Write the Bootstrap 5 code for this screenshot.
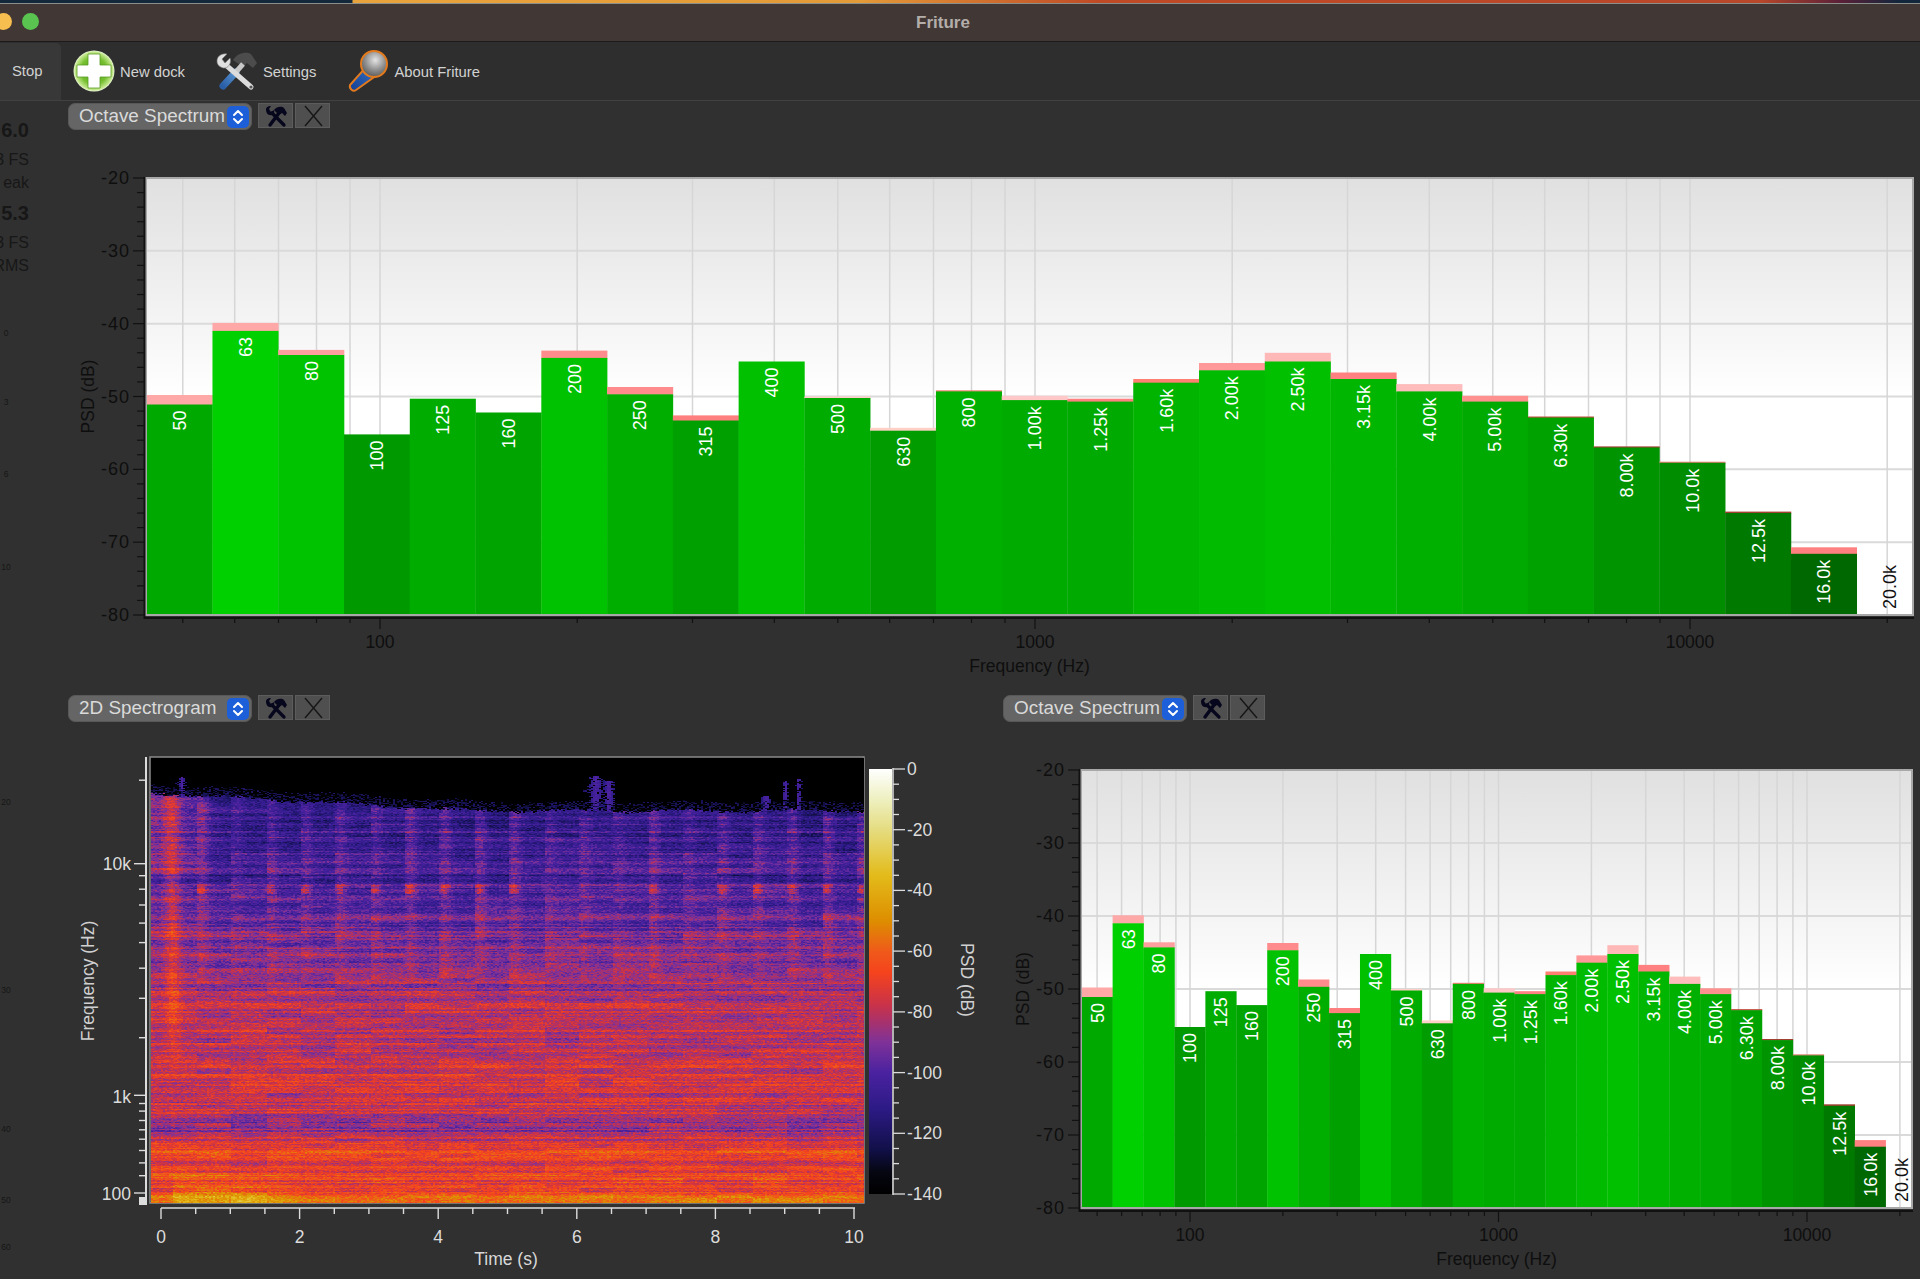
<!DOCTYPE html>
<html lang="en">
<head>
  <meta charset="UTF-8" />
  <title>Friture</title>
  <link href="https://cdn.jsdelivr.net/npm/bootstrap@5.3.3/dist/css/bootstrap.min.css" rel="stylesheet"/>
  <style>
    html, body { height: 1279px; overflow: hidden; }
    body { background: #303030; font-family: "Liberation Sans", Arial, sans-serif; color: #d4d4d4; }
    svg { display: block; }
    svg text { font-family: "Liberation Sans", Arial, sans-serif; }

    .top-strip { height: 4px; border-bottom: 1px solid #8a8f8c; background: linear-gradient(90deg, #14283c 0, #14283c 352px, #e9a33c 353px, #e39a38 860px, #bf4a26 1100px, #b9472a 1760px, #5a2038 1840px, #12263c 1900px); }
    .title-bar { height: 38px; background: #413735; border-bottom: 1px solid #1c1a1a; position: relative; }
    .title-text { font-size: 17px; font-weight: 700; color: #b4aeaa; width: 100%; text-align: center; padding-right: 34px; }
    .win-dot { position: absolute; top: 9px; width: 17px; height: 17px; border-radius: 50%; }
    .win-yellow { left: -5px; background: #f5be4f; }
    .win-green { left: 22px; background: #5ac451; }

    .tool-bar { height: 59px; background: #2e2e2e; border-bottom: 1px solid #414141; font-size: 14.8px; color: #d2d2d2; }
    .tool-stop { width: 61px; height: 57px; margin-top: 1px; background: #383838; border-top-right-radius: 5px; padding-left: 12px; }
    .tool-item { gap: 5px; margin-left: 31px; }
    .tool-item.tool-first { margin-left: 12px; }
    .tool-name { padding-top: 2px; }

    .meter-col { width: 68px; flex: none; color: #171717; }
    .meter-text { width: 29px; height: 177px; padding-top: 17px; text-align: right; white-space: nowrap; display: flex; flex-direction: column; align-items: flex-end; }
    .meter-num { font-size: 20px; font-weight: 700; line-height: 24px; margin-bottom: 7px; }
    .meter-lbl { font-size: 16px; line-height: 22.5px; }
    .meter-gap { margin-top: 7px; }

    .dock-head { height: 28px; gap: 6px; padding-top: 1px; }
    .dock-select { width: 184px; height: 27px; padding: 0 2px 0 10px; font-size: 18.9px; line-height: 1; color: #dadada; background: #656565; border: 1px solid #585858; border-radius: 7px; }
    .dock-select:hover { background: #656565; color: #dadada; border-color: #585858; }
    .select-arrow { width: 22px; height: 22px; border-radius: 5px; background: #1d5fd8; flex: none; }
    .dock-btn { width: 35px; height: 25px; margin-right: -4px; padding: 0; background: #4f4f4f; border: 1px solid #5c5c5c; border-radius: 0; }
    .dock-btn:hover { background: #4f4f4f; border-color: #5c5c5c; }
    .dock-first { padding-top: 1px; }
    .plot-top { width: 1852px; height: 564px; }
    .plot-left { width: 935px; height: 557px; }
    .plot-right { width: 917px; height: 557px; }
    .plot-wrap { position: relative; }
    /* the spectrogram picture sits over the axes svg, at the plot area */
    #spectro { position: absolute; left: 83px; top: 36px; width: 713px; height: 445px; filter: blur(.5px); }
  </style>
</head>
<body>
  <svg width="0" height="0" class="position-absolute">
    <defs>
      <symbol id="ico-tools" viewBox="0 0 24 24">
        <path d="M6 21 L15 9" stroke="#06061c" stroke-width="3.4" stroke-linecap="round" fill="none"/>
        <path d="M10 6 C13 2 18 2 20 4 L23 9 L21 12 L18 9 L15 11 z" fill="#06061c"/>
        <path d="M20 21 L8 9" stroke="#06061c" stroke-width="3.2" stroke-linecap="round" fill="none"/>
        <path d="M2 6 C2 3 4 2 7 2 L5 5 L7 8 L10 6 C11 9 9 12 6 11 C4 11 2 9 2 6 z" fill="#06061c"/>
      </symbol>
      <symbol id="ico-close" viewBox="0 0 24 24">
        <path d="M4 2 L21 22 M21 2 L4 22" stroke="#161616" stroke-width="1.4" fill="none"/>
      </symbol>
      <symbol id="ico-updown" viewBox="0 0 22 22">
        <path d="M7 9 L11 5 L15 9 M7 13 L11 17 L15 13" stroke="#fff" stroke-width="2" fill="none" stroke-linecap="round" stroke-linejoin="round"/>
      </symbol>
      <radialGradient id="g-plus" cx="50%" cy="50%" r="50%">
        <stop offset="0" stop-color="#4e9d1c"/><stop offset=".65" stop-color="#76c030"/><stop offset=".92" stop-color="#c4e88e"/><stop offset="1" stop-color="#eaf6d8"/>
      </radialGradient>
      <linearGradient id="g-handle" x1="0" y1="1" x2="1" y2="0">
        <stop offset="0" stop-color="#2a5fa8"/><stop offset="1" stop-color="#5a94d0"/>
      </linearGradient>
      <linearGradient id="g-mic" x1="0" y1="1" x2="1" y2="0">
        <stop offset="0" stop-color="#123f94"/><stop offset=".7" stop-color="#2c62b4"/><stop offset="1" stop-color="#9aa8bc"/>
      </linearGradient>
      <radialGradient id="g-ball" cx="55%" cy="35%" r="65%">
        <stop offset="0" stop-color="#e4e4e4"/><stop offset=".6" stop-color="#8e8e8e"/><stop offset="1" stop-color="#5c5c5c"/>
      </radialGradient>
    </defs>
  </svg>

  <div class="top-strip"></div>
  <div class="title-bar d-flex align-items-center">
    <span class="win-dot win-yellow"></span>
    <span class="win-dot win-green"></span>
    <div class="title-text">Friture</div>
  </div>

  <div class="tool-bar d-flex align-items-center">
    <div class="tool-stop d-flex align-items-center">Stop</div>
    <div class="tool-item tool-first d-flex align-items-center">
      <svg width="42" height="44" viewBox="0 0 42 44">
        <circle cx="21" cy="22" r="20.5" fill="url(#g-plus)"/>
        <path d="M15 5 H27 V16 H38 V28 H27 V39 H15 V28 H4 V16 H15 z" fill="#fff" stroke="#5b9c24" stroke-width=".8"/>
      </svg>
      <span class="tool-name">New dock</span>
    </div>
    <div class="tool-item d-flex align-items-center">
      <svg width="42" height="40" viewBox="0 0 42 40">
        <path d="M17 9 C21 2 30 0 35 3 L41 12 L37 17 L31 12 L27 16 z" fill="#4c4c4c"/>
        <path d="M7 35 L20 21" stroke="url(#g-handle)" stroke-width="7" stroke-linecap="round" fill="none"/>
        <path d="M20 21 L27 13" stroke="#c8c8c8" stroke-width="5" fill="none"/>
        <path d="M11 15 L35 36" stroke="#dcdcdc" stroke-width="5" stroke-linecap="round" fill="none"/>
        <circle cx="35" cy="36" r="1.6" fill="#555"/>
        <path d="M1 10 C1 5 6 2 11 3 L6 8 L9 12 L14 7 C16 12 12 18 7 17 C4 16 1 14 1 10 z" fill="#e0e0e0" stroke="#777" stroke-width=".6"/>
      </svg>
      <span class="tool-name">Settings</span>
    </div>
    <div class="tool-item d-flex align-items-center">
      <svg width="42" height="44" viewBox="0 0 42 44">
        <path d="M19 18 L30 26 L9 41 C6 43 2 40 3 36 z" fill="url(#g-mic)" stroke="#e27a1e" stroke-width="2"/>
        <circle cx="27" cy="15" r="13" fill="url(#g-ball)" stroke="#e27a1e" stroke-width="2"/>
      </svg>
      <span class="tool-name">About Friture</span>
    </div>
  </div>

  <div class="d-flex">
    <div class="meter-col">
      <div class="meter-text">
        <div class="meter-num">6.0</div>
        <div class="meter-lbl">3 FS</div>
        <div class="meter-lbl">eak</div>
        <div class="meter-num meter-gap">5.3</div>
        <div class="meter-lbl">3 FS</div>
        <div class="meter-lbl">RMS</div>
      </div>
      <svg id="meterScale" width="68" height="1001" viewBox="0 278 68 1001"></svg>
    </div>

    <div class="flex-grow-1">
      <div class="dock-first">
        <div class="dock-head d-flex align-items-start">
          <button class="dock-select btn d-flex align-items-center justify-content-between">Octave Spectrum<span class="select-arrow"><svg width="22" height="22"><use href="#ico-updown"/></svg></span></button>
          <button class="dock-btn btn d-flex align-items-center justify-content-center"><svg width="24" height="24"><use href="#ico-tools"/></svg></button>
          <button class="dock-btn btn d-flex align-items-center justify-content-center"><svg width="24" height="24"><use href="#ico-close"/></svg></button>
        </div>
        <svg id="plotTop" class="plot-top" viewBox="68 130 1852 564"></svg>
      </div>
      <div class="d-flex">
        <div class="plot-wrap">
          <div class="dock-head d-flex align-items-start">
            <button class="dock-select btn d-flex align-items-center justify-content-between">2D Spectrogram<span class="select-arrow"><svg width="22" height="22"><use href="#ico-updown"/></svg></span></button>
            <button class="dock-btn btn d-flex align-items-center justify-content-center"><svg width="24" height="24"><use href="#ico-tools"/></svg></button>
            <button class="dock-btn btn d-flex align-items-center justify-content-center"><svg width="24" height="24"><use href="#ico-close"/></svg></button>
          </div>
          <div class="plot-wrap">
            <svg id="plotSpec" class="plot-left" viewBox="68 722 935 557"></svg>
            <canvas id="spectro" width="713" height="445"></canvas>
          </div>
        </div>
        <div>
          <div class="dock-head d-flex align-items-start">
            <button class="dock-select btn d-flex align-items-center justify-content-between">Octave Spectrum<span class="select-arrow"><svg width="22" height="22"><use href="#ico-updown"/></svg></span></button>
            <button class="dock-btn btn d-flex align-items-center justify-content-center"><svg width="24" height="24"><use href="#ico-tools"/></svg></button>
            <button class="dock-btn btn d-flex align-items-center justify-content-center"><svg width="24" height="24"><use href="#ico-close"/></svg></button>
          </div>
          <svg id="plotRight" class="plot-right" viewBox="1003 722 917 557"></svg>
        </div>
      </div>
    </div>
  </div>

  <script>
    // label, level (dB), peak (dB), peak colour
    const bands = [
      ["50", -51.1, -49.8, "#ffa8a8"], ["63", -41.0, -39.9, "#ffa8a8"], ["80", -44.3, -43.6, "#ff9e9e"],
      ["100", -55.2, -55.2, ""], ["125", -50.3, -50.3, ""], ["160", -52.2, -52.2, ""],
      ["200", -44.7, -43.7, "#ff8c8c"], ["250", -49.7, -48.7, "#ff8c8c"], ["315", -53.3, -52.6, "#ff7f7f"],
      ["400", -45.2, -45.2, ""], ["500", -50.2, -50.0, "#ffd0c8"], ["630", -54.7, -54.3, "#ffd0c8"],
      ["800", -49.3, -49.15, "#f08070"], ["1.00k", -50.5, -49.9, "#ffc8c8"], ["1.25k", -50.7, -50.3, "#ff8080"],
      ["1.60k", -48.1, -47.6, "#ff7f70"], ["2.00k", -46.4, -45.4, "#ff9898"], ["2.50k", -45.2, -44.0, "#ffb8b8"],
      ["3.15k", -47.6, -46.7, "#ff8080"], ["4.00k", -49.3, -48.3, "#ffbcbc"], ["5.00k", -50.7, -49.9, "#ff9090"],
      ["6.30k", -52.9, -52.75, "#c05040"], ["8.00k", -57.0, -56.85, "#a04030"], ["10.0k", -59.1, -58.95, "#e08070"],
      ["12.5k", -66.0, -65.8, "#a04030"], ["16.0k", -71.6, -70.7, "#ff8080"], ["20.0k", -90, -90, ""]
    ];
    const darkInk = "#0e0e0e", lightInk = "#dcdcdc";

    function line(x1, y1, x2, y2, color, w) {
      return `<line x1="${x1}" y1="${y1}" x2="${x2}" y2="${y2}" stroke="${color}" stroke-width="${w}"/>`;
    }
    function label(x, y, text, size, color, anchor, rot) {
      const t = rot ? ` transform="rotate(${rot} ${x} ${y})"` : "";
      return `<text x="${x}" y="${y}" font-size="${size}" fill="${color}" text-anchor="${anchor || "middle"}" dominant-baseline="central"${t}>${text}</text>`;
    }
    // green gets darker with the level, a bit faster above -53 dB
    function barGreen(db) {
      return Math.round(160 + (db + 53.3) * (db > -53.3 ? 3.9 : 3.06));
    }

    function octavePlot(id, x0, x1, top, bot, barW, x100, decade) {
      const yOf = db => top + (-20 - db) * (bot - top) / 60;
      const xOf = f => x100 + Math.log10(f / 100) * decade;
      let s = `<defs><linearGradient id="bg${id}" x1="0" y1="0" x2="0" y2="1"><stop offset="0" stop-color="#e0e0e0"/><stop offset=".5" stop-color="#fff"/></linearGradient></defs>`;
      s += `<rect x="${x0}" y="${top}" width="${x1 - x0}" height="${bot - top}" fill="url(#bg${id})"/>`;

      // grid and ticks
      for (let db = -30; db >= -70; db -= 10) s += line(x0, yOf(db), x1, yOf(db), "#dadada", 2);
      const freqs = [50, 60, 70, 80, 90];
      [100, 1000].forEach(d => { for (let k = 1; k <= 9; k++) freqs.push(k * d); });
      freqs.push(10000, 20000);
      freqs.forEach(f => {
        const x = xOf(f).toFixed(1), major = f === 100 || f === 1000 || f === 10000;
        s += line(x, top, x, bot, "#d6d6d6", 1.5);
        s += line(x, bot + 3, x, bot + (major ? 14 : 8), "#111", 1.2);
        if (major) s += label(x, bot + 27, f, 17.5, darkInk);
      });

      // bars
      bands.forEach((b, i) => {
        const x = x0 + .7 + i * barW, w = Math.min(barW, x1 - x);
        const yL = yOf(b[1]), yP = yOf(b[2]);
        if (b[1] > -80) {
          if (b[3]) s += `<rect x="${x}" y="${yP.toFixed(1)}" width="${w + .3}" height="${(yL - yP + .5).toFixed(1)}" fill="${b[3]}"/>`;
          s += `<rect x="${x}" y="${yL.toFixed(1)}" width="${w + .3}" height="${(bot - yL).toFixed(1)}" fill="rgb(0,${barGreen(b[1])},0)"/>`;
          s += label(x + barW / 2 + .5, yL + 6, b[0], 18, "#fff", "end", -90);
        } else {
          s += label(x + barW / 2 + .5, bot - 6, b[0], 18, "#111", "start", -90);
        }
      });

      // frame and axes
      s += `<rect x="${x0}" y="${top}" width="${x1 - x0}" height="${bot - top}" fill="none" stroke="#a8a8a8" stroke-width="2"/>`;
      s += line(x0 - 1.5, top - 1, x0 - 1.5, bot + 4, "#111", 2);
      s += line(x0 - 2, bot + 3, x1 + 1, bot + 3, "#111", 2);
      for (let db = -20; db >= -80; db -= 2) {
        const major = db % 10 === 0, y = yOf(db);
        s += line(x0 - (major ? 13 : 9), y, x0 - 1, y, "#111", 1.2);
        if (major) s += `<text x="${x0 - 16}" y="${y}" font-size="18" letter-spacing="1" fill="${darkInk}" text-anchor="end" dominant-baseline="central">${db}</text>`;
      }
      s += label(x0 - 58, (top + bot) / 2, "PSD (dB)", 17.5, darkInk, "middle", -90);
      s += label((x0 + x1) / 2, bot + 51, "Frequency (Hz)", 17.5, darkInk);
      document.getElementById(id).innerHTML = s;
    }

    octavePlot("plotTop", 146, 1913, 178, 615, 65.77, 380, 655);
    octavePlot("plotRight", 1081, 1912, 770, 1208, 30.92, 1190, 308.5);

    // meter scale on the left, mostly cut off by the window edge
    document.getElementById("meterScale").innerHTML =
      [["0", 333], ["3", 402], ["6", 474], ["10", 567], ["20", 802], ["30", 990], ["40", 1129], ["50", 1200], ["60", 1247]]
        .map(m => label(6, m[1], m[0], 8.5, "#161616")).join("");

    // spectrogram axes
    const stops = [
      [-140, 0, 0, 0], [-133, 5, 6, 16], [-125, 18, 16, 74], [-112, 44, 26, 133], [-100, 74, 34, 160], [-90, 127, 50, 152],
      [-78, 200, 50, 74], [-67, 245, 67, 29], [-60, 239, 90, 26], [-50, 221, 142, 0], [-35, 227, 187, 26],
      [-20, 229, 220, 128], [-10, 238, 240, 192], [0, 255, 255, 255]
    ];
    function cmap(db) {
      if (db <= -140) return [0, 0, 0];
      if (db >= 0) return [255, 255, 255];
      let i = 0;
      while (stops[i + 1][0] < db) i++;
      const a = stops[i], b = stops[i + 1], t = (db - a[0]) / (b[0] - a[0]);
      return [1, 2, 3].map(k => a[k] + (b[k] - a[k]) * t);
    }
    (function () {
      let s = "<defs><linearGradient id=\"cbar\" x1=\"0\" y1=\"1\" x2=\"0\" y2=\"0\">";
      stops.forEach(c => { s += `<stop offset="${(c[0] + 140) / 140}" stop-color="rgb(${c[1]},${c[2]},${c[3]})"/>`; });
      s += "</linearGradient></defs>";
      s += `<rect x="150" y="757" width="714" height="446" fill="#000" stroke="#8a8a8a" stroke-width="1.5"/>`;

      // frequency axis
      s += line(146, 757, 146, 1205, lightInk, 2);
      [240, 462, 494, 530, 572, 620, 672, 740, 820, 925, 1078, 1100, 1120, 1145, 1170, 1195, 1225, 1258, 1292, 1338].forEach(Y => {
        const y = (690 + Y / 2.66).toFixed(1), major = Y === 462 || Y === 1078 || Y === 1338;
        s += line(major ? 134 : 139, y, 146, y, lightInk, 1.4);
      });
      s += `<rect x="139" y="1197" width="7" height="8" fill="${lightInk}"/>`;
      s += label(131, 864, "10k", 17.5, lightInk, "end");
      s += label(131, 1097, "1k", 17.5, lightInk, "end");
      s += label(131, 1194, "100", 17.5, lightInk, "end");
      s += label(88, 981, "Frequency (Hz)", 17.5, "#d0d0d0", "middle", -90);

      // time axis
      s += line(161, 1208, 855, 1208, lightInk, 1.6);
      for (let t = 0; t <= 20; t++) {
        const x = (161 + t * 34.65).toFixed(1), major = t % 4 === 0;
        s += line(x, 1208, x, major ? 1219 : 1214, lightInk, 1.4);
        if (major) s += label(x, 1237, t / 2, 17.5, lightInk);
      }
      s += label(506, 1259, "Time (s)", 17.5, "#d8d8d8");

      // colour bar
      s += `<rect x="869" y="769" width="23" height="425" fill="url(#cbar)"/>`;
      s += line(893, 768, 893, 1195, lightInk, 1.5);
      for (let db = 0; db >= -140; db -= 5) {
        const y = (769 + (-db) * 425 / 140).toFixed(1), major = db % 20 === 0;
        s += line(893, y, major ? 905 : 899, y, lightInk, 1.3);
        if (major) s += label(907, y, db, 17.5, lightInk, "start");
      }
      s += label(967, 980, "PSD (dB)", 17.5, "#d0d0d0", "middle", 90);
      document.getElementById("plotSpec").innerHTML = s;
    })();

    // spectrogram picture: synthetic levels, seeded so each run gives the same image
    (function () {
      let seed = 20240611;
      const rnd = () => {
        seed = (seed + 0x6D2B79F5) | 0;
        let t = Math.imul(seed ^ (seed >>> 15), 1 | seed);
        t = (t + Math.imul(t ^ (t >>> 7), 61 | t)) ^ t;
        return ((t ^ (t >>> 14)) >>> 0) / 4294967296;
      };
      const W = 713, H = 445, cols = 357;
      const base = [[.06, -112], [.12, -104], [.2, -102], [.3, -96], [.42, -89], [.52, -84], [.62, -79], [.72, -76], [.79, -78], [.815, -88], [.835, -86], [.86, -76], [.885, -70], [.915, -73], [.94, -69], [.97, -70], [1, -58]];
      const baseAt = f => {
        if (f <= base[0][0]) return base[0][1];
        for (let i = 1; i < base.length; i++) if (f <= base[i][0]) {
          const a = base[i - 1], b = base[i];
          return a[1] + (b[1] - a[1]) * (f - a[0]) / (b[0] - a[0]);
        }
        return -58;
      };
      // harmonic rows: same offset along the row, changed a bit per half second
      const rowOff = [];
      let r = 0;
      while (r < H) {
        const v = (rnd() - .5) * 2, n = 1 + Math.floor(rnd() * 2);
        for (let i = 0; i < n && r < H; i++, r++) rowOff[r] = v;
      }
      const segOff = [];
      for (let i = 0; i < 24; i++) { segOff[i] = []; for (let j = 0; j < 90; j++) segOff[i][j] = (rnd() - .5) * 2; }
      const beatOff = [];
      for (let i = 0; i < 24; i++) beatOff[i] = rnd();
      // fuzzy spikes above the cutoff: centre, half width, start
      const spikes = [[.042, .004, .042], [.622, .009, .04], [.64, .007, .05], [.887, .003, .05], [.906, .003, .045], [.86, .006, .085]];

      const ctx = document.getElementById("spectro").getContext("2d");
      const img = ctx.createImageData(W, H);
      for (let y = 0; y < H; y++) {
        const f = y / H;
        for (let c = 0; c < cols; c++) {
          const u = c / cols, t = u * 10.27 - .14;
          const cut = .075 + .04 * Math.min(1, u * 2.2) + Math.sin(u * 40) * .003 + rnd() * .006;
          let db;
          if (f < cut) {
            db = -140;
            spikes.forEach(p => {
              const g = Math.exp(-Math.pow((u - p[0]) / p[1], 2));
              if (f > p[2] && rnd() < g) db = -122 + g * 18 + rnd() * 6;
            });
            if (f > cut - .02 && rnd() < .45) db = -130 + rnd() * 12;
          } else {
            db = baseAt(f);
            const up = Math.max(0, 1 - f / .7);
            const seg = Math.max(0, Math.floor(t * 2));
            db += rowOff[y] * (f > .12 ? 7 : 3);
            db += segOff[seg][Math.floor(f * 89)] * 5;
            db += (rnd() - .5) * 15;
            // first second is louder up high, with the attack line at 0.2 s
            db += Math.max(0, 1 - t / 1.1) * (f < .25 ? 20 : 10) * up;
            if (f < .72) db += 14 * Math.exp(-Math.pow((t - .17) / .1, 2)) * Math.min(1, (.72 - f) * 6);
            // percussive columns in the top part
            const phase = t * 2 - Math.floor(t * 2);
            if (f < .5) db += (Math.exp(-Math.pow((phase - .15) / .2, 2)) * 12 - 6) * (.4 + beatOff[seg] * .6) * up * 1.6;
            if (Math.abs(f - .295) < .01 && beatOff[seg] > .35) db += 13 * Math.exp(-Math.pow((phase - .12) / .14, 2));
            if (Math.abs(f - .27) < .008) db -= 9;
            if (Math.abs(f - .335) < .006) db -= 5;
            // thin bright bands in the low end
            if (Math.abs(f - .885) < .005 || Math.abs(f - .935) < .004) db += 7;
            // low end: bright in the opening two seconds, speckled and fading out
            if (f > .93 && t > .15) {
              const fade = t < 1.1 ? 1 : Math.max(0, 1 - (t - 1.1) / .9);
              db += (14 * (f - .93) / .07 + 3) * (.5 + rnd() * .7) * fade;
            }
            if (f > .98) db += 7;
          }
          const col = cmap(db);
          for (let dx = 0; dx < 2; dx++) {
            const i = (y * W + Math.min(W - 1, c * 2 + dx)) * 4;
            img.data[i] = col[0]; img.data[i + 1] = col[1]; img.data[i + 2] = col[2]; img.data[i + 3] = 255;
          }
        }
      }
      ctx.putImageData(img, 0, 0);
    })();
  </script>
  <script src="https://cdn.jsdelivr.net/npm/bootstrap@5.3.3/dist/js/bootstrap.bundle.min.js"></script>
</body>
</html>
